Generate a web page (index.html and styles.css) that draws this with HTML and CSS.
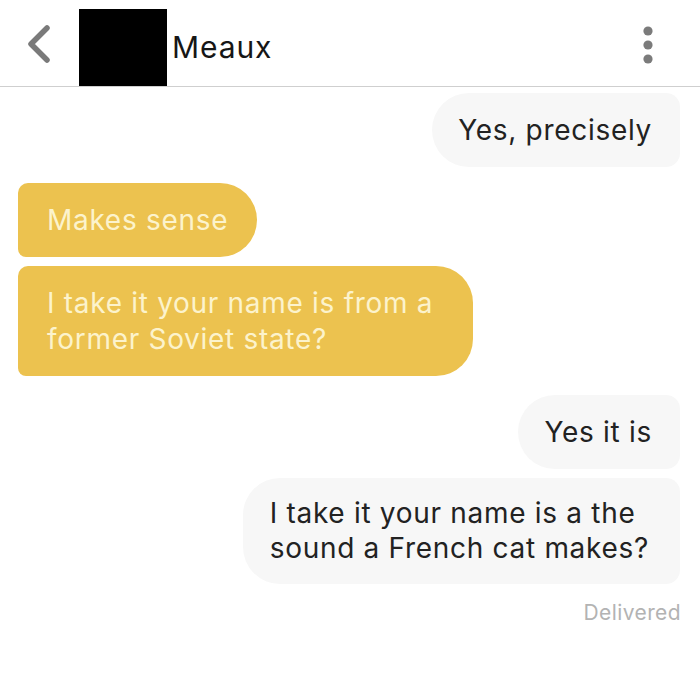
FILE: index.html
```html
<!DOCTYPE html>
<html>
<head>
<meta charset="utf-8">
<link rel="stylesheet" href="styles.css">
</head>
<body>
<div class="screen">
  <header class="topbar">
    <svg class="back" width="30" height="40" viewBox="0 0 30 40">
      <polyline points="22,4 6,20 22,36" fill="none" stroke="#7a7a7a" stroke-width="5.5" stroke-linecap="round" stroke-linejoin="round"/>
    </svg>
    <div class="avatar"></div>
    <div class="name">Meaux</div>
    <svg class="more" width="12" height="40" viewBox="0 0 12 40">
      <circle cx="6" cy="6" r="4.6" fill="#7b7b7b"/>
      <circle cx="6" cy="20" r="4.6" fill="#7b7b7b"/>
      <circle cx="6" cy="34" r="4.6" fill="#7b7b7b"/>
    </svg>
  </header>
  <main class="thread">
    <div class="msg out first">Yes, precisely</div>
    <div class="msg in gap-lg">Makes sense</div>
    <div class="msg in gap-sm wide">I take it your name is from a<br>former Soviet state?</div>
    <div class="msg out gap-xl">Yes it is</div>
    <div class="msg out gap-sm big">I take it your name is a the<br>sound a French cat makes?</div>
    <div class="status">Delivered</div>
  </main>
</div>
</body>
</html>
```
FILE: styles.css
```css
html, body {
  margin: 0;
  padding: 0;
  background: #ffffff;
}
.screen {
  width: 700px;
  height: 700px;
  overflow: hidden;
  font-family: "Inter", "Open Sans", "Liberation Sans", sans-serif;
}
.topbar {
  height: 87px;
  border-bottom: 1.5px solid #cfcfcf;
  display: flex;
  align-items: center;
  padding-left: 25px;
  padding-right: 46px;
  box-sizing: border-box;
}
.back {
  display: block;
  margin-top: 2px;
}
.avatar {
  width: 88px;
  height: 77px;
  background: #000;
  margin-left: 24px;
  align-self: flex-start;
  margin-top: 9px;
}
.name {
  font-size: 30px;
  color: #161616;
  margin-left: 5px;
  letter-spacing: 0.9px;
  margin-top: 8px;
}
.more {
  margin-left: auto;
  display: block;
  margin-top: 4px;
}
.thread {
  display: flex;
  flex-direction: column;
  padding: 0 18px 0 18px;
}
.msg {
  font-size: 28px;
  letter-spacing: 0.7px;
  line-height: 36px;
  padding: 19px 28px 19px 26px;
  max-width: 560px;
}
.msg.out {
  align-self: flex-end;
  background: #f7f7f7;
  color: #222;
  border-radius: 37px 14px 14px 37px;
  margin-right: 2px;
}
.msg.in {
  align-self: flex-start;
  background: #ecc24f;
  color: #fcf3cc;
  border-radius: 10px 37px 37px 8px;
  padding-left: 29px;
  padding-right: 29px;
}
.msg.first { margin-top: 6px; }
.gap-lg { margin-top: 16px; }
.gap-xl { margin-top: 19px; }
.gap-sm { margin-top: 9px; }
.msg.wide { padding-right: 40px; }
.msg.big {
  line-height: 35px;
  padding: 18px 31px 18px 27px;
}
.status {
  align-self: flex-end;
  margin-top: 16px;
  margin-right: 1px;
  font-size: 21px;
  letter-spacing: 0.4px;
  color: #b3b3b3;
}
```
